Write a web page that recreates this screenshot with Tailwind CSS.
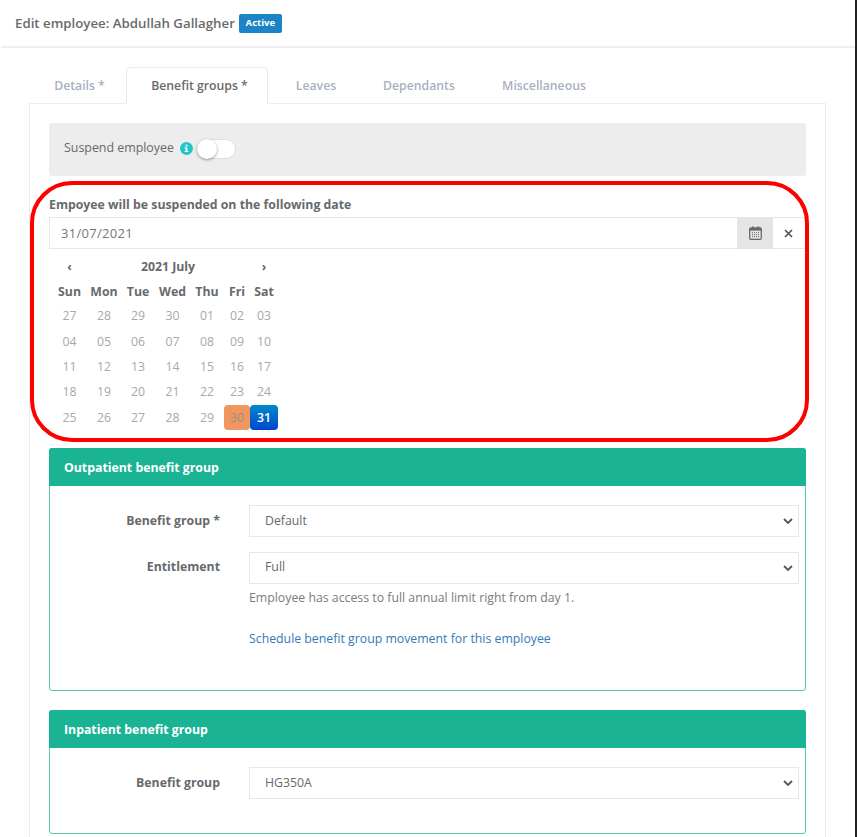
<!DOCTYPE html>
<html><head><meta charset="utf-8">
<script src="https://cdn.jsdelivr.net/npm/@tailwindcss/browser@4"></script>
</head>
<body class="bg-white">
<div class="relative w-[857px] h-[837px] overflow-hidden bg-white font-['Open_Sans',sans-serif] text-[#676a6c] border-r-2 border-r-[#222] box-border">
  <header class="ml-px h-[48px] border-b-2 border-[#eeeeee] pl-[14px] pt-[13px] flex items-start gap-[4px]">
    <span class="text-[13.25px] leading-[20px] font-semibold">Edit employee: Abdullah Gallagher</span>
    <span class="mt-px h-[19px] w-[43px] rounded-[2px] bg-[#1c84c6] text-white text-[9.5px] font-bold flex items-center justify-center">Active</span>
  </header>
  <main class="ml-[29px] w-[797px] pt-[19px]">
    <nav class="flex h-[36px] text-[12.25px] font-semibold text-[#a7b1c2] relative z-10">
      <span class="w-[97px] pl-[4px] pt-[2px] flex items-center justify-center">Details *</span>
      <span class="w-[142px] h-[37px] pl-[5px] pt-px flex items-center justify-center text-[#676a6c] bg-white border border-[#e7eaec] border-b-white rounded-t-[4px]">Benefit groups *</span>
      <span class="w-[96px] pt-[2px] flex items-center justify-center">Leaves</span>
      <span class="w-[110px] pt-[2px] flex items-center justify-center">Dependants</span>
      <span class="w-[140px] pt-[2px] flex items-center justify-center">Miscellaneous</span>
    </nav>
    <section class="h-[740px] border border-[#eeeeee] pt-[19px] pl-[19px]">
      <div class="w-[757px] h-[53px] bg-[#ededed] rounded-[3px] pl-[15px] pb-[2px] flex items-center gap-[6px] text-[12.4px]">
        <span class="-mt-px">Suspend employee</span>
        <svg class="w-[13px] h-[13px] -mt-px" viewBox="0 0 13 13"><circle cx="6.5" cy="6.5" r="6.5" fill="#23c6c8"/><rect x="5.6" y="2.7" width="1.8" height="1.7" fill="#fff"/><rect x="5.6" y="5.4" width="1.8" height="4.3" fill="#fff"/><rect x="4.6" y="5.4" width="1.5" height="1" fill="#fff"/><rect x="4.6" y="9" width="3.8" height="1" fill="#fff"/></svg>
        <span class="relative -ml-[2px] w-[39px] h-[20px] rounded-full border border-[#dfdfdf] bg-white">
          <span class="absolute -left-px -top-px w-[20px] h-[20px] rounded-full bg-white shadow-[0_1px_3px_rgba(0,0,0,0.4)]"></span>
        </span>
      </div>
      <p class="mt-[21px] h-[15px] text-[12.3px] leading-[15px] font-bold">Empoyee will be suspended on the following date</p>
      <div class="mt-[5px] w-[757px] h-[32px] flex border border-[#e7e7e7] text-[13px]">
        <span class="flex-1 pl-[11px] pt-px flex items-center tracking-[0.3px] text-[#777]">31/07/2021</span>
        <span class="w-[36px] -my-px bg-[#e5e5e5] flex items-center justify-center">
          <svg class="w-[13px] h-[14px]" viewBox="0 0 13 14" fill="none"><rect x="0.7" y="2" width="11.6" height="11.3" rx="1.2" stroke="#676a6c" stroke-width="1.3"/><rect x="0.7" y="2" width="11.6" height="2.6" fill="#676a6c"/><rect x="3" y="0.4" width="1.6" height="2.6" fill="#676a6c"/><rect x="8.4" y="0.4" width="1.6" height="2.6" fill="#676a6c"/><path d="M3 6.7h7M3 8.7h7M3 10.7h7" stroke="#676a6c" stroke-dasharray="1 1"/></svg>
        </span>
        <span class="w-[32px] pr-[2px] flex items-center justify-center">
          <svg class="w-[9px] h-[9px]" viewBox="0 0 9 9"><path d="M1 1l7 7M8 1l-7 7" stroke="#555" stroke-width="1.7"/></svg>
        </span>
      </div>
      <div class="ml-[3px] mt-[5px] w-[226px] h-[177px] text-[12.3px] grid grid-cols-[35px_34px_34px_35px_34px_26px_28px] content-start text-center">
        <div class="col-span-7 h-[25px] pt-px grid grid-cols-[35px_1fr_28px] items-center font-bold">
          <span>‹</span><span class="pl-[2px] pr-[3px] font-bold">2021 July</span><span>›</span>
        </div>
        <span class="h-[25px] leading-[25px] font-bold">Sun</span><span class="h-[25px] leading-[25px] font-bold">Mon</span><span class="h-[25px] leading-[25px] font-bold">Tue</span><span class="h-[25px] leading-[25px] font-bold">Wed</span><span class="h-[25px] leading-[25px] font-bold">Thu</span><span class="h-[25px] leading-[25px] font-bold">Fri</span><span class="h-[25px] leading-[25px] font-bold">Sat</span>
        <div class="col-span-7 grid grid-cols-subgrid auto-rows-[25.3px] items-center text-[#a8a8a8]">
          <span>27</span><span>28</span><span>29</span><span>30</span><span>01</span><span>02</span><span>03</span>
          <span>04</span><span>05</span><span>06</span><span>07</span><span>08</span><span>09</span><span>10</span>
          <span>11</span><span>12</span><span>13</span><span>14</span><span>15</span><span>16</span><span>17</span>
          <span>18</span><span>19</span><span>20</span><span>21</span><span>22</span><span>23</span><span>24</span>
          <span>25</span><span>26</span><span>27</span><span>28</span><span>29</span>
          <span class="h-[25px] leading-[25px] rounded-[4px] bg-[#f0965f] text-[#a08f7e]">30</span>
          <span class="h-[25px] leading-[25px] rounded-[4px] bg-gradient-to-b from-[#0088cc] to-[#0044cc] text-white font-semibold">31</span>
        </div>
      </div>

      <div class="mt-[17px] w-[757px] h-[243px] rounded-[3px] border border-[#5cc5ae]">
        <h3 class="-m-px h-[38px] rounded-t-[3px] bg-[#1ab394] text-white text-[12.3px] font-bold pl-[15px] pt-[2px] flex items-center">Outpatient benefit group</h3>
        <div class="grid grid-cols-[170px_550px] gap-x-[29px] pt-[20px] text-[12.3px]">
          <label class="h-[32px] flex items-center justify-end font-bold">Benefit group *</label>
          <div class="h-[32px] border border-[#e7e7e7] pl-[15px] pr-[5px] flex items-center justify-between">
            <span>Default</span>
            <svg class="w-[10px] h-[6px]" viewBox="0 0 10 6" fill="none"><path d="M1 1l4 4 4-4" stroke="#555" stroke-width="1.8"/></svg>
          </div>
          <label class="mt-[15px] h-[32px] pb-[2px] flex items-center justify-end font-bold">Entitlement</label>
          <div class="mt-[15px] h-[32px] border border-[#e7e7e7] pl-[15px] pr-[5px] flex items-center justify-between">
            <span class="-mt-[2px]">Full</span>
            <svg class="w-[10px] h-[6px]" viewBox="0 0 10 6" fill="none"><path d="M1 1l4 4 4-4" stroke="#555" stroke-width="1.8"/></svg>
          </div>
          <p class="col-start-2 mt-[5px] h-[18px] leading-[18px] text-[#7b7b7b]">Employee has access to full annual limit right from day 1.</p>
          <a class="col-start-2 mt-[23px] h-[18px] leading-[18px] text-[#337ab7]">Schedule benefit group movement for this employee</a>
        </div>
      </div>

      <div class="mt-[19px] w-[757px] h-[124px] rounded-[3px] border border-[#5cc5ae]">
        <h3 class="-m-px h-[38px] rounded-t-[3px] bg-[#1ab394] text-white text-[12.3px] font-bold pl-[15px] pt-[2px] flex items-center">Inpatient benefit group</h3>
        <div class="grid grid-cols-[170px_550px] gap-x-[29px] pt-[20px] text-[12.3px]">
          <label class="h-[32px] flex items-center justify-end font-bold">Benefit group</label>
          <div class="h-[32px] border border-[#e7e7e7] pl-[15px] pr-[5px] flex items-center justify-between">
            <span>HG350A</span>
            <svg class="w-[10px] h-[6px]" viewBox="0 0 10 6" fill="none"><path d="M1 1l4 4 4-4" stroke="#555" stroke-width="1.8"/></svg>
          </div>
        </div>
      </div>
    </section>
  </main>
  <div class="absolute left-[30px] top-[181px] w-[779px] h-[261px] rounded-[42px] border-[4px] border-[#ff0000] pointer-events-none"></div>
</div>
</body></html>
